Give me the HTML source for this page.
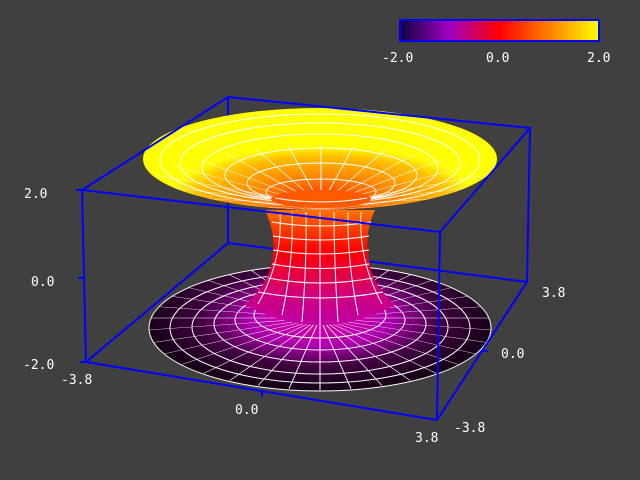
<!DOCTYPE html><html><head><style>html,body{margin:0;padding:0;background:#404040}svg{display:block}text{font-family:"DejaVu Sans Mono","Liberation Mono",monospace;font-size:13px;fill:#fff}</style></head><body>
<svg width="640" height="480" viewBox="0 0 640 480">
<defs>
<linearGradient id="cb" x1="0" x2="1"><stop offset="0" stop-color="#100040"/><stop offset=".25" stop-color="#a000c0"/><stop offset=".5" stop-color="#ff0000"/><stop offset=".75" stop-color="#ff8000"/><stop offset="1" stop-color="#ffff00"/></linearGradient>
<radialGradient id="bot" cx="320" cy="318" r="171" gradientUnits="userSpaceOnUse" gradientTransform="translate(0,318) scale(1,.4) translate(0,-318)"><stop offset="0" stop-color="#e000a0"/><stop offset=".4" stop-color="#b000b0"/><stop offset=".7" stop-color="#400040"/><stop offset="1" stop-color="#180018"/></radialGradient>
<linearGradient id="neck" x1="0" y1="205" x2="0" y2="335" gradientUnits="userSpaceOnUse"><stop offset="0" stop-color="#ff8000"/><stop offset=".35" stop-color="#ff0000"/><stop offset=".7" stop-color="#d00080"/><stop offset="1" stop-color="#b800b0"/></linearGradient>
<radialGradient id="top" cx="322" cy="200" r="180" gradientUnits="userSpaceOnUse" gradientTransform="translate(0,200) scale(1,.35) translate(0,-200)"><stop offset="0" stop-color="#ff3000"/><stop offset=".35" stop-color="#ff8000"/><stop offset=".7" stop-color="#ffc000"/><stop offset=".85" stop-color="#ffff00"/><stop offset="1" stop-color="#ffff00"/></radialGradient>
<clipPath id="cbot"><ellipse cx="320" cy="328" rx="171" ry="63"/></clipPath>
<clipPath id="ctop"><ellipse cx="320" cy="159" rx="177" ry="51"/></clipPath>
<path id="rad" d="M0,0L180,0M0,0L177,31M0,0L169,62M0,0L156,90M0,0L138,116M0,0L116,138M0,0L90,156M0,0L62,169M0,0L31,177M0,0L0,180M0,0L-31,177M0,0L-62,169M0,0L-90,156M0,0L-116,138M0,0L-138,116M0,0L-156,90M0,0L-169,62M0,0L-177,31M0,0L-180,0M0,0L-177,-31M0,0L-169,-62M0,0L-156,-90M0,0L-138,-116M0,0L-116,-138M0,0L-90,-156M0,0L-62,-169M0,0L-31,-177M0,0L0,-180M0,0L31,-177M0,0L62,-169M0,0L90,-156M0,0L116,-138M0,0L138,-116M0,0L156,-90M0,0L169,-62M0,0L177,-31"/>
</defs>
<g stroke="#0000ff" stroke-width="2" fill="none">
<line x1="228" y1="97" x2="228" y2="243"/><line x1="228" y1="243" x2="527" y2="282"/><line x1="228" y1="243" x2="86" y2="362"/>
</g>
<ellipse cx="320" cy="328" rx="171" ry="63" fill="url(#bot)" stroke="#fff" stroke-width="1"/>
<g clip-path="url(#cbot)" stroke="#fff" stroke-width="1" fill="none">
<ellipse cx="320" cy="328" rx="150" ry="55"/><ellipse cx="320" cy="327" rx="128" ry="47"/><ellipse cx="320" cy="324" rx="106" ry="38"/><ellipse cx="320" cy="320" rx="85" ry="30"/><ellipse cx="320" cy="315" rx="66" ry="23"/>
<use href="#rad" transform="translate(320,318) scale(1,.4)"/>
</g>
<path d="M265,210 C272,225 275,240 273,255 C271,275 262,290 245,305 Q320,345 395,305 C378,290 370,275 368,255 C366,240 368,225 375,210 Z" fill="url(#neck)"/>
<g stroke="#fff" stroke-width="1" fill="none">
<path d="M272,222 Q320,230 371,222M273,236 Q320,244 369,236M273,250 Q320,258 369,250M272,264 Q320,273 369,264M268,278 Q320,288 373,278M258,292 Q320,304 383,292"/>
<path d="M280,212 Q283,260 258,304M292,212 Q294,260 282,315M306,212 Q307,260 302,322M320,212 L320,325M334,212 Q334,260 338,322M348,212 Q347,260 358,315M361,212 Q358,260 382,304"/>
</g>
<ellipse cx="320" cy="159" rx="177" ry="51" fill="url(#top)"/>
<g clip-path="url(#ctop)" stroke="#fff" stroke-width="1" fill="none">
<ellipse cx="320" cy="160" rx="160" ry="46"/><ellipse cx="320" cy="163" rx="140" ry="40"/><ellipse cx="320" cy="168" rx="118" ry="34"/><ellipse cx="321" cy="175" rx="96" ry="27"/><ellipse cx="321" cy="183" rx="74" ry="20"/><ellipse cx="321" cy="192" rx="55" ry="13"/>
<use href="#rad" transform="translate(321,205) scale(1.05,.33)"/>
</g>
<ellipse cx="321" cy="199" rx="50" ry="9" fill="#ff5a00"/>
<path d="M275,198 Q321,206 367,198" stroke="#fff" fill="none"/>
<g stroke="#0000ff" stroke-width="2" fill="none">
<path d="M228,97 L530,128 L440,232 L82,190 Z"/>
<line x1="82" y1="190" x2="86" y2="362"/><line x1="530" y1="128" x2="527" y2="282"/><line x1="440" y1="232" x2="437" y2="420"/>
<line x1="86" y1="362" x2="437" y2="420"/><line x1="437" y1="420" x2="527" y2="282"/>
<line x1="76" y1="190" x2="82" y2="190"/><line x1="78" y1="278" x2="84" y2="278"/><line x1="80" y1="362" x2="86" y2="362"/>
<line x1="262" y1="391" x2="262" y2="397"/><line x1="482" y1="351" x2="488" y2="351"/>
</g>
<rect x="400" y="20" width="199" height="21" fill="url(#cb)" stroke="#0000ff" stroke-width="2"/>
<text x="382" y="62">-2.0</text><text x="486" y="62">0.0</text><text x="587" y="62">2.0</text>
<text x="24" y="198">2.0</text><text x="31" y="286">0.0</text><text x="23" y="369">-2.0</text>
<text x="61" y="384">-3.8</text><text x="235" y="414">0.0</text><text x="415" y="442">3.8</text>
<text x="454" y="432">-3.8</text><text x="501" y="358">0.0</text><text x="542" y="297">3.8</text>
</svg></body></html>
